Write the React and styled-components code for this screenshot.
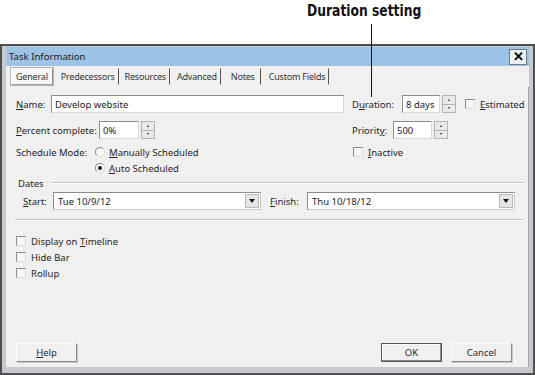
import { createGlobalStyle } from "styled-components";
import styled from "styled-components";

const GlobalStyle = createGlobalStyle`
  html, body {
    margin: 0;
    background: #ffffff;
  }

  body {
    font-family: "Noto Sans", "Liberation Sans", sans-serif;
    font-size: 9.5px;
    color: #262626;
  }

  u {
    text-decoration-thickness: 1px;
    text-underline-offset: 1px;
  }
`;

const Page = styled.div`
  position: relative;
  width: 535px;
  height: 375px;
  overflow: hidden;
`;

const CaptionBar = styled.div`
  height: 44px;
  padding: 1px 0 0 307px;
  box-sizing: border-box;
`;

const Caption = styled.span`
  display: inline-block;
  transform: scaleX(0.83);
  transform-origin: left center;
  font-family: "DejaVu Sans Condensed", "DejaVu Sans", sans-serif;
  font-weight: bold;
  font-size: 16.5px;
  line-height: 20px;
  color: #111;
  white-space: nowrap;
`;

// callout line points at the duration field, drawn over the dialog
const CalloutLine = styled.div`
  position: absolute;
  left: 371px;
  top: 24px;
  width: 1px;
  height: 73px;
  background: #111;
`;

const Dialog = styled.div`
  height: 331px;
  box-sizing: border-box;
  border: 2px solid #4e4f51;
  background: #c6cacf;
  padding: 1px 4px 6px 4px;
  display: flex;
  flex-direction: column;
`;

const TitleBar = styled.div`
  height: 19px;
  flex: none;
  display: flex;
  align-items: center;
  justify-content: space-between;
  padding: 0 2px 0 3px;
  background: #9dc3e6;
  font-size: 9.6px;
  color: #1c1c1c;
`;

const CloseButton = styled.div`
  width: 16px;
  height: 14px;
  border: 1px solid #6d7c8b;
  background: #eef2f5;
  display: flex;
  align-items: center;
  justify-content: center;
  font-family: "Liberation Sans", sans-serif;
  font-weight: bold;
  font-size: 13px;
  color: #000;
`;

const Body = styled.div`
  flex: 1;
  display: flex;
  flex-direction: column;
  background: #f0f0f0;
`;

const TabStrip = styled.div`
  height: 21px;
  flex: none;
  display: flex;
  align-items: center;
  padding-left: 4px;
  font-size: 9px;
  letter-spacing: -0.2px;
`;

const Tab = styled.div`
  height: 17px;
  box-sizing: border-box;
  display: flex;
  align-items: center;
  padding: 0 ${(p) => p.$pr}px 0 ${(p) => p.$pl}px;
  border: 1px solid ${(p) => (p.$active ? "#a0a0a0" : "transparent")};
  border-top-color: ${(p) => (p.$active ? "#ffffff" : "transparent")};
  border-left-color: ${(p) => (p.$active ? "#ffffff" : "transparent")};
  border-right: 1px solid ${(p) => (p.$active ? "#909090" : "#555")};
  background: ${(p) => (p.$active ? "#f7f7f7" : "transparent")};
  box-shadow: ${(p) => (p.$active ? "0 0 0 1px #b5b5b5" : "none")};
  margin: 0 ${(p) => (p.$active ? 3 : 0)}px 0 ${(p) => (p.$active ? 1 : 0)}px;
  color: #333;
`;

const Panel = styled.div`
  flex: 1;
  display: flex;
  flex-direction: column;
  padding: 8px 0 5px 10px;
  border-right: 1px solid #a5a5a5;
`;

const Top = styled.div`
  display: flex;
`;

const LeftCol = styled.div`
  width: 336px;
  display: flex;
  flex-direction: column;
`;

const RightCol = styled.div`
  display: flex;
  flex-direction: column;
`;

const Row = styled.div`
  display: flex;
  align-items: center;
  height: ${(p) => p.$h || 18}px;
  margin-top: ${(p) => p.$mt || 0}px;
  padding-left: ${(p) => p.$pl || 0}px;
`;

const Label = styled.span`
  width: ${(p) => p.$w}px;
  margin-left: ${(p) => p.$ml || 0}px;
  flex: none;
  white-space: nowrap;
`;

const TextField = styled.div`
  width: ${(p) => p.$w}px;
  height: 18px;
  box-sizing: border-box;
  flex: none;
  display: flex;
  align-items: center;
  padding-left: 3px;
  background: #ffffff;
  border: 1px solid;
  border-color: #8c8c8c #d9d9d9 #d9d9d9 #8c8c8c;
  color: #222;
`;

const Spin = styled.div`
  width: 14px;
  height: 18px;
  margin-left: 2px;
  display: flex;
  flex-direction: column;
  flex: none;
`;

const SpinHalf = styled.div`
  flex: 1;
  box-sizing: border-box;
  border: 1px solid #b4b4b4;
  border-top-width: ${(p) => (p.$down ? 0 : 1)}px;
  background: #e9e9e9;
  display: flex;
  align-items: center;
  justify-content: center;

  &::after {
    content: "";
    border-left: 1.5px solid transparent;
    border-right: 1.5px solid transparent;
    ${(p) => (p.$down ? "border-top" : "border-bottom")}: 2px solid #222;
  }
`;

const Check = styled.span`
  width: 10px;
  height: 10px;
  box-sizing: border-box;
  flex: none;
  border: 1px solid;
  border-color: #8a8a8a #dcdcdc #dcdcdc #8a8a8a;
  background: #f6f6f6;
  margin-left: ${(p) => p.$ml || 0}px;
  margin-right: 5px;
`;

const Radio = styled.span`
  width: 10px;
  height: 10px;
  box-sizing: border-box;
  flex: none;
  border-radius: 50%;
  border: 1px solid;
  border-color: #8a8a8a #dcdcdc #dcdcdc #8a8a8a;
  background: #f6f6f6;
  margin-right: 4px;
  display: flex;
  align-items: center;
  justify-content: center;

  &::after {
    content: "";
    width: 4px;
    height: 4px;
    border-radius: 50%;
    background: ${(p) => (p.$on ? "#111" : "transparent")};
  }
`;

const Legend = styled.div`
  display: flex;
  align-items: center;
  height: 14px;
  padding-left: 2px;
  margin-right: 4px;
`;

const Rule = styled.div`
  flex: 1;
  height: 0;
  border-top: 1px solid #c4c4c4;
  border-bottom: 1px solid #ffffff;
  margin-left: ${(p) => p.$ml || 0}px;
`;

const Combo = styled.div`
  width: 208px;
  height: 18px;
  box-sizing: border-box;
  flex: none;
  display: flex;
  align-items: center;
  justify-content: space-between;
  padding: 0 1px 0 4px;
  background: #ffffff;
  border: 1px solid;
  border-color: #8c8c8c #c9c9c9 #c9c9c9 #8c8c8c;
  color: #222;
`;

const ComboArrow = styled.span`
  width: 14px;
  height: 14px;
  box-sizing: border-box;
  border: 1px solid #b9b9b9;
  background: #e6e6e6;
  display: flex;
  align-items: center;
  justify-content: center;

  &::after {
    content: "";
    border-left: 3px solid transparent;
    border-right: 3px solid transparent;
    border-top: 4px solid #111;
  }
`;

const Separator = styled.div`
  margin: 9px 4px 0 -1px;
  border-top: 1px solid #c4c4c4;
  border-bottom: 1px solid #ffffff;
`;

const Spacer = styled.div`
  flex: 1;
`;

const Footer = styled.div`
  display: flex;
  align-items: center;
  padding-right: 16px;
`;

const Button = styled.div`
  width: 61px;
  height: 19px;
  box-sizing: border-box;
  display: flex;
  align-items: center;
  justify-content: center;
  background: #f0f0f0;
  border: 1px solid;
  border-color: ${(p) => (p.$default ? "#555" : "#fdfdfd #8a8a8a #8a8a8a #fdfdfd")};
  box-shadow: ${(p) => (p.$default ? "inset -1px -1px 0 #8a8a8a, inset 1px 1px 0 #fff" : "1px 1px 0 #c8c8c8")};
  margin-left: ${(p) => p.$ml || 0}px;
  color: #2b2b2b;
`;

const tabs = [
  { label: "General", active: true, pl: 4, pr: 4 },
  { label: "Predecessors", pl: 4, pr: 3 },
  { label: "Resources", pl: 5, pr: 3 },
  { label: "Advanced", pl: 6, pr: 3 },
  { label: "Notes", pl: 9, pr: 5 },
  { label: "Custom Fields", pl: 7, pr: 3 },
];

const options = [
  { id: "timeline", label: <>Display on <u>T</u>imeline</> },
  { id: "hidebar", label: "Hide Bar" },
  { id: "rollup", label: "Rollup" },
];

export default function App() {
  return (
    <Page>
      <GlobalStyle />
      <CaptionBar>
        <Caption>Duration setting</Caption>
      </CaptionBar>
      <Dialog>
        <TitleBar>
          <span>Task Information</span>
          <CloseButton>✕</CloseButton>
        </TitleBar>
        <Body>
          <TabStrip>
            {tabs.map(({ label, active, pl, pr }) => (
              <Tab key={label} $active={active} $pl={pl} $pr={pr}>
                {label}
              </Tab>
            ))}
          </TabStrip>
          <Panel>
            <Top>
              <LeftCol>
                <Row>
                  <Label $w={35}>
                    <u>N</u>ame:
                  </Label>
                  <TextField $w={293}>Develop website</TextField>
                </Row>
                <Row $mt={8}>
                  <Label $w={83}>
                    <u>P</u>ercent complete:
                  </Label>
                  <TextField $w={40}>0%</TextField>
                  <Spin>
                    <SpinHalf />
                    <SpinHalf $down />
                  </Spin>
                </Row>
                <Row $h={16} $mt={5}>
                  <Label $w={79}>Schedule Mode:</Label>
                  <Radio />
                  <span>
                    <u>M</u>anually Scheduled
                  </span>
                </Row>
                <Row $h={16} $pl={79}>
                  <Radio $on />
                  <span>
                    <u>A</u>uto Scheduled
                  </span>
                </Row>
              </LeftCol>
              <RightCol>
                <Row>
                  <Label $w={50}>
                    D<u>u</u>ration:
                  </Label>
                  <TextField $w={38}>8 days</TextField>
                  <Spin>
                    <SpinHalf />
                    <SpinHalf $down />
                  </Spin>
                  <Check $ml={9} />
                  <span>
                    <u>E</u>stimated
                  </span>
                </Row>
                <Row $mt={8}>
                  <Label $w={41}>
                    Priorit<u>y</u>:
                  </Label>
                  <TextField $w={39}>500</TextField>
                  <Spin>
                    <SpinHalf />
                    <SpinHalf $down />
                  </Spin>
                </Row>
                <Row $h={16} $mt={5}>
                  <Check $ml={1} />
                  <span>
                    <u>I</u>nactive
                  </span>
                </Row>
              </RightCol>
            </Top>
            <Legend>
              <span>Dates</span>
              <Rule $ml={7} />
            </Legend>
            <Row $mt={2} $pl={7}>
              <Label $w={30}>
                <u>S</u>tart:
              </Label>
              <Combo>
                <span>Tue 10/9/12</span>
                <ComboArrow />
              </Combo>
              <Label $w={37} $ml={9}>
                <u>F</u>inish:
              </Label>
              <Combo>
                <span>Thu 10/18/12</span>
                <ComboArrow />
              </Combo>
            </Row>
            <Separator />
            {options.map(({ id, label }, i) => (
              <Row key={id} $h={16} $mt={i === 0 ? 12 : 0}>
                <Check />
                <span>{label}</span>
              </Row>
            ))}
            <Spacer />
            <Footer>
              <Button>
                <span>
                  <u>H</u>elp
                </span>
              </Button>
              <Spacer />
              <Button $default>OK</Button>
              <Button $ml={9}>Cancel</Button>
            </Footer>
          </Panel>
        </Body>
      </Dialog>
      <CalloutLine />
    </Page>
  );
}
